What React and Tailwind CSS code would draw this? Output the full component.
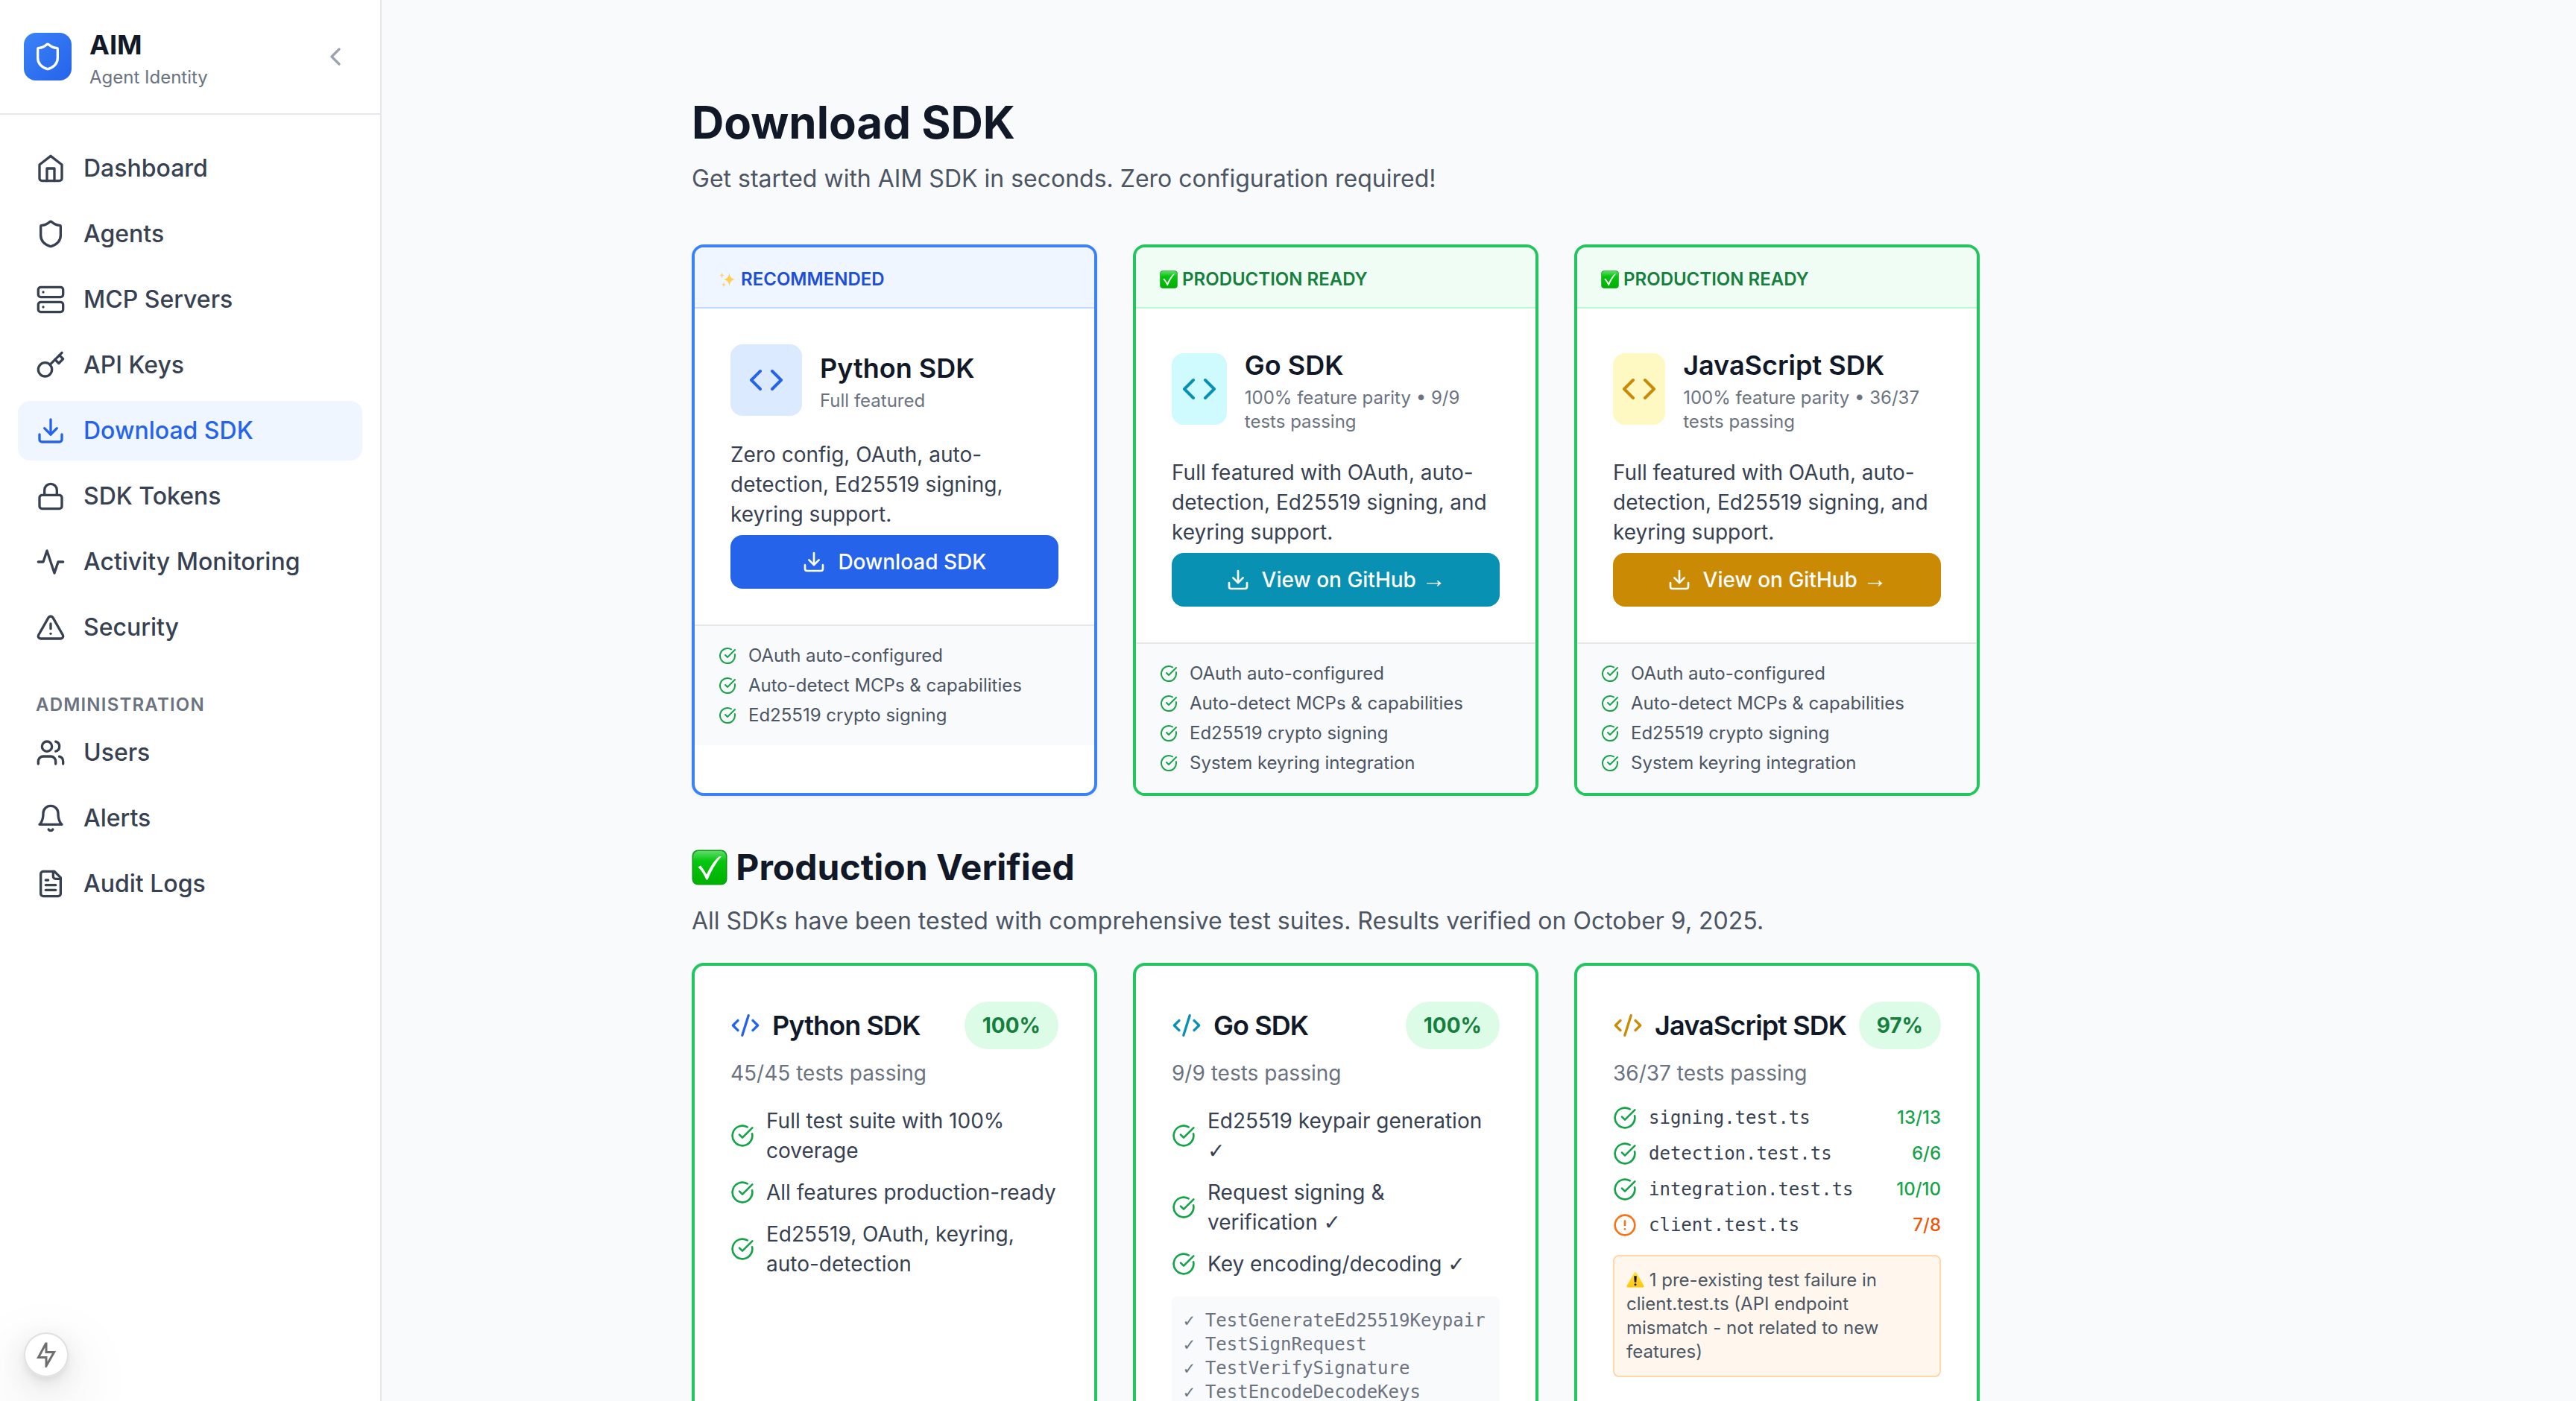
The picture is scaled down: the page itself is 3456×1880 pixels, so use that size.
import React from "react";

/* ---------- Icons ---------- */

function Icon({ className = "", children }) {
  return (
    <svg
      viewBox="0 0 24 24"
      fill="none"
      stroke="currentColor"
      strokeWidth="2"
      strokeLinecap="round"
      strokeLinejoin="round"
      aria-hidden="true"
      className={`shrink-0 ${className}`}
    >
      {children}
    </svg>
  );
}

const glyphs = {
  home: (
    <>
      <path d="m3 9 9-7 9 7v11a2 2 0 0 1-2 2H5a2 2 0 0 1-2-2z" />
      <polyline points="9 22 9 12 15 12 15 22" />
    </>
  ),
  shield: (
    <path d="M20 13c0 5-3.5 7.5-7.66 8.95a1 1 0 0 1-.67-.01C7.5 20.5 4 18 4 13V6a1 1 0 0 1 1-1c2 0 4.5-1.2 6.24-2.72a1.17 1.17 0 0 1 1.52 0C14.51 3.81 17 5 19 5a1 1 0 0 1 1 1z" />
  ),
  server: (
    <>
      <rect width="20" height="8" x="2" y="2" rx="2" ry="2" />
      <rect width="20" height="8" x="2" y="14" rx="2" ry="2" />
      <path d="M6 6h.01" />
      <path d="M6 18h.01" />
    </>
  ),
  key: (
    <>
      <path d="m15.5 7.5 3 3L22 7l-3-3" />
      <path d="m21 2-9.6 9.6" />
      <circle cx="7.5" cy="15.5" r="5.5" />
    </>
  ),
  download: (
    <>
      <path d="M21 15v4a2 2 0 0 1-2 2H5a2 2 0 0 1-2-2v-4" />
      <polyline points="7 10 12 15 17 10" />
      <path d="M12 15V3" />
    </>
  ),
  lock: (
    <>
      <rect width="18" height="11" x="3" y="11" rx="2" ry="2" />
      <path d="M7 11V7a5 5 0 0 1 10 0v4" />
    </>
  ),
  activity: <path d="M22 12h-4l-3 9L9 3l-3 9H2" />,
  alertTriangle: (
    <>
      <path d="m21.73 18-8-14a2 2 0 0 0-3.48 0l-8 14A2 2 0 0 0 4 21h16a2 2 0 0 0 1.73-3" />
      <path d="M12 9v4" />
      <path d="M12 17h.01" />
    </>
  ),
  users: (
    <>
      <path d="M16 21v-2a4 4 0 0 0-4-4H6a4 4 0 0 0-4 4v2" />
      <circle cx="9" cy="7" r="4" />
      <path d="M22 21v-2a4 4 0 0 0-3-3.87" />
      <path d="M16 3.13a4 4 0 0 1 0 7.75" />
    </>
  ),
  bell: (
    <>
      <path d="M6 8a6 6 0 0 1 12 0c0 7 3 9 3 9H3s3-2 3-9" />
      <path d="M10.3 21a1.94 1.94 0 0 0 3.4 0" />
    </>
  ),
  fileText: (
    <>
      <path d="M15 2H6a2 2 0 0 0-2 2v16a2 2 0 0 0 2 2h12a2 2 0 0 0 2-2V7Z" />
      <path d="M14 2v4a2 2 0 0 0 2 2h4" />
      <path d="M10 9H8" />
      <path d="M16 13H8" />
      <path d="M16 17H8" />
    </>
  ),
  chevronLeft: <path d="m15 18-6-6 6-6" />,
  code: (
    <>
      <polyline points="16 18 22 12 16 6" />
      <polyline points="8 6 2 12 8 18" />
    </>
  ),
  codeXml: (
    <>
      <path d="m18 16 4-4-4-4" />
      <path d="m6 8-4 4 4 4" />
      <path d="m14.5 4-5 16" />
    </>
  ),
  check: (
    <>
      <path d="M21.801 10A10 10 0 1 1 17 3.335" />
      <path d="m9 11 3 3L22 4" />
    </>
  ),
  alertCircle: (
    <>
      <circle cx="12" cy="12" r="10" />
      <path d="M12 8v4" />
      <path d="M12 16h.01" />
    </>
  ),
};

/* ---------- Emoji drawings ---------- */

function CheckEmoji({ className }) {
  return (
    <svg viewBox="0 0 48 48" role="img" aria-label="check mark" className={className}>
      <defs>
        <linearGradient id="emoji-green" x1="0" y1="0" x2="0" y2="1">
          <stop offset="0" stopColor="#5fdc6a" />
          <stop offset="0.3" stopColor="#06c60f" />
          <stop offset="1" stopColor="#00b000" />
        </linearGradient>
      </defs>
      <rect x="0.5" y="0.5" width="47" height="47" rx="8" fill="#0a9a14" />
      <rect x="2" y="2" width="44" height="45" rx="7" fill="url(#emoji-green)" />
      <path d="M8.5 23.5 12 21.5C15 25 17.5 29 20 33.500 24.500 23.500 30 15 36.500 9.500L40 9C32 18.500 26 29 21.500 40.500H19.500C16.500 33.500 13 28 8.500 23.500Z" fill="#fff" />
    </svg>
  );
}

function SparklesEmoji({ className }) {
  return (
    <svg viewBox="0 0 48 48" role="img" aria-label="sparkles" className={className}>
      <path d="M29 6c1.500 11 4 15 15 18-11 3-13.500 7-15 19-1.500-12-4-16-15-19 11-3 13.500-7 15-18Z" fill="#fdce4f" />
      <path d="M9 4c.8 6 2 8 7 9-5 1-6.200 3-7 9-.8-6-2-8-7-9 5-1 6.200-3 7-9Z" fill="#f9d48a" />
      <path d="M14 30c.7 5 2 7 6 8-4 1-5.300 3-6 8-.7-5-2-7-6-8 4-1 5.300-3 6-8Z" fill="#f9d48a" />
    </svg>
  );
}

function WarningEmoji({ className }) {
  return (
    <svg viewBox="0 0 48 48" role="img" aria-label="warning" className={className}>
      <defs>
        <linearGradient id="emoji-yellow" x1="0" y1="0" x2="0" y2="1">
          <stop offset="0" stopColor="#ffe24a" />
          <stop offset="1" stopColor="#ffc60a" />
        </linearGradient>
      </defs>
      <path d="M24 4c1.500 0 2.500.8 3.300 2.200L46.500 40c1.500 2.700.3 5-2.500 5H4c-2.800 0-4-2.300-2.500-5L20.700 6.200C21.500 4.800 22.500 4 24 4Z" fill="url(#emoji-yellow)" />
      <path d="M21 15h6l-1 16h-4Z" fill="#1c1a10" stroke="#1c1a10" strokeLinejoin="round" />
      <circle cx="24" cy="37.500" r="3" fill="#1c1a10" />
    </svg>
  );
}

/* ---------- Data ---------- */

const mainNav = [
  { label: "Dashboard", icon: "home" },
  { label: "Agents", icon: "shield" },
  { label: "MCP Servers", icon: "server" },
  { label: "API Keys", icon: "key" },
  { label: "Download SDK", icon: "download", active: true },
  { label: "SDK Tokens", icon: "lock" },
  { label: "Activity Monitoring", icon: "activity" },
  { label: "Security", icon: "alertTriangle" },
];

const adminNav = [
  { label: "Users", icon: "users" },
  { label: "Alerts", icon: "bell" },
  { label: "Audit Logs", icon: "fileText" },
];

const baseFeatures = ["OAuth auto-configured", "Auto-detect MCPs & capabilities", "Ed25519 crypto signing"];

const downloads = [
  {
    name: "Python SDK",
    tagline: "Full featured",
    description: "Zero config, OAuth, auto-detection, Ed25519 signing, keyring support.",
    badge: "RECOMMENDED",
    recommended: true,
    border: "border-[#3b82f6]",
    strip: "bg-[#eff6ff] border-[#bfdbfe] text-[#1d4ed8]",
    tile: "bg-[#dbeafe] text-[#2563eb]",
    button: "bg-[#2563eb]",
    features: baseFeatures,
  },
  {
    name: "Go SDK",
    tagline: "100% feature parity • 9/9 tests passing",
    description: "Full featured with OAuth, auto-detection, Ed25519 signing, and keyring support.",
    badge: "PRODUCTION READY",
    border: "border-[#22c55e]",
    strip: "bg-[#f0fdf4] border-[#bbf7d0] text-[#15803d]",
    tile: "bg-[#cffafe] text-[#0891b2]",
    button: "bg-[#0891b2]",
    features: [...baseFeatures, "System keyring integration"],
  },
  {
    name: "JavaScript SDK",
    tagline: "100% feature parity • 36/37 tests passing",
    description: "Full featured with OAuth, auto-detection, Ed25519 signing, and keyring support.",
    badge: "PRODUCTION READY",
    border: "border-[#22c55e]",
    strip: "bg-[#f0fdf4] border-[#bbf7d0] text-[#15803d]",
    tile: "bg-[#fef9c3] text-[#ca8a04]",
    button: "bg-[#ca8a04]",
    features: [...baseFeatures, "System keyring integration"],
  },
];

const goTests = ["TestGenerateEd25519Keypair", "TestSignRequest", "TestVerifySignature", "TestEncodeDecodeKeys"];

const jsTests = [
  { file: "signing.test.ts", score: "13/13", ok: true },
  { file: "detection.test.ts", score: "6/6", ok: true },
  { file: "integration.test.ts", score: "10/10", ok: true },
  { file: "client.test.ts", score: "7/8", ok: false },
];

/* ---------- Sidebar ---------- */

function NavItem({ label, icon, active }) {
  return (
    <li>
      <a
        href="#"
        aria-current={active ? "page" : undefined}
        className={`flex items-center gap-6 rounded-2xl px-6 py-4 text-[32px] leading-[48px] font-medium ${
          active ? "bg-[#eff6ff] text-[#2563eb]" : "text-[#374151]"
        }`}
      >
        <Icon className="size-10">{glyphs[icon]}</Icon>
        {label}
      </a>
    </li>
  );
}

function Sidebar() {
  return (
    <aside className="flex w-128 shrink-0 flex-col border-r-2 border-[#e5e7eb] bg-white">
      <div className="flex items-center gap-6 border-b-2 border-[#e5e7eb] p-8">
        <div className="flex size-16 items-center justify-center rounded-2xl bg-linear-to-br from-[#3b82f6] to-[#2563eb] text-white">
          <Icon className="size-10">{glyphs.shield}</Icon>
        </div>
        <div className="flex-1">
          <p className="text-[36px] leading-[56px] font-bold text-[#111827]">AIM</p>
          <p className="text-2xl text-[#6b7280]">Agent Identity</p>
        </div>
        <button type="button" aria-label="Collapse sidebar" className="p-2 text-[#9ca3af]">
          <Icon className="size-10">{glyphs.chevronLeft}</Icon>
        </button>
      </div>
      <nav className="flex-1 px-6 py-8" aria-label="Main">
        <ul className="flex flex-col gap-2">
          {mainNav.map((item) => (
            <NavItem key={item.label} {...item} />
          ))}
        </ul>
        <h2 className="mt-12 mb-2 px-6 text-2xl font-semibold tracking-wider text-[#6b7280]">ADMINISTRATION</h2>
        <ul className="flex flex-col gap-2">
          {adminNav.map((item) => (
            <NavItem key={item.label} {...item} />
          ))}
        </ul>
      </nav>
    </aside>
  );
}

/* ---------- Download cards ---------- */

function DownloadCard({ sdk }) {
  return (
    <article className={`overflow-hidden rounded-2xl border-4 bg-white shadow-[0_2px_4px_rgba(0,0,0,0.05)] ${sdk.border}`}>
      <p className={`border-b-2 px-8 pt-[27px] pb-[21px] text-2xl font-semibold ${sdk.strip}`}>
        {sdk.recommended ? (
          <SparklesEmoji className="inline-block size-6 align-[-4px]" />
        ) : (
          <CheckEmoji className="inline-block size-6 align-[-4px]" />
        )}{" "}
        {sdk.badge}
      </p>
      <div className="p-12">
        <div className="flex items-center gap-6">
          <div className={`flex h-24 w-24 items-center justify-center rounded-2xl ${sdk.tile}`}>
            <Icon className="size-12">{glyphs.code}</Icon>
          </div>
          <div>
            <h3 className="text-[36px] leading-[56px] font-semibold text-[#111827]">{sdk.name}</h3>
            <p className="text-2xl text-[#6b7280]">{sdk.tagline}</p>
          </div>
        </div>
        <p className="mt-8 text-[28px] leading-[40px] text-[#374151]">{sdk.description}</p>
        <button
          type="button"
          className={`mt-2 flex w-full items-center justify-center gap-4 rounded-2xl py-4 text-[28px] leading-[40px] font-medium text-white ${sdk.button}`}
        >
          <Icon className="size-8">{glyphs.download}</Icon>
          {sdk.recommended ? (
            "Download SDK"
          ) : (
            <span>
              View on GitHub <span className="font-['Liberation_Serif',serif] text-[32px] leading-none font-normal">→</span>
            </span>
          )}
        </button>
      </div>
      <ul className="flex flex-col gap-2 border-t-2 border-[#e5e7eb] bg-[#f9fafb] px-8 py-6 text-2xl text-[#4b5563]">
        {sdk.features.map((feature) => (
          <li key={feature} className="flex items-center gap-4">
            <Icon className="size-6 text-[#16a34a]">{glyphs.check}</Icon>
            {feature}
          </li>
        ))}
      </ul>
    </article>
  );
}

/* ---------- Verification cards ---------- */

function VerifiedCard({ name, iconColor, percent, tests, children }) {
  return (
    <article className="rounded-2xl border-4 border-[#22c55e] bg-white p-12 shadow-[0_2px_4px_rgba(0,0,0,0.05)]">
      <div className="flex items-center justify-between">
        <h3 className="flex items-center gap-4 text-[36px] leading-[56px] font-semibold tracking-tight whitespace-nowrap text-[#111827]">
          <Icon className={`size-10 ${iconColor}`}>{glyphs.codeXml}</Icon>
          {name}
        </h3>
        <span className="rounded-full bg-[#dcfce7] px-6 py-3 text-[28px] leading-[40px] font-bold text-[#15803d]">
          {percent}
        </span>
      </div>
      <p className="mt-3 text-[28px] leading-[40px] text-[#6b7280]">{tests}</p>
      <div className="mt-6">{children}</div>
    </article>
  );
}

function Tick() {
  return <span className="font-['DejaVu_Sans',sans-serif] leading-none font-bold">✓</span>;
}

function CheckItem({ children }) {
  return (
    <li className="flex items-center gap-4">
      <Icon className="size-8 text-[#16a34a]">{glyphs.check}</Icon>
      <span>{children}</span>
    </li>
  );
}

function CheckList({ children }) {
  return <ul className="flex flex-col gap-4 text-[28px] leading-[40px] text-[#374151]">{children}</ul>;
}

/* ---------- Page ---------- */

export default function App() {
  return (
    <div className="flex h-screen overflow-hidden bg-[#f9fafb] font-['Inter',sans-serif] antialiased">
      <Sidebar />

      <main className="min-w-0 flex-1 overflow-y-auto [scrollbar-width:none]">
        <div className="max-w-[2560px]">
          <div className="mx-auto max-w-[1792px] px-8 py-32">
            <header>
              <h1 className="text-6xl leading-[72px] font-bold text-[#111827]">Download SDK</h1>
              <p className="mt-4 text-[32px] leading-[48px] text-[#4b5563]">
                Get started with AIM SDK in seconds. Zero configuration required!
              </p>
            </header>

            <section className="mt-16 grid grid-cols-3 gap-12" aria-label="SDK downloads">
              {downloads.map((sdk) => (
                <DownloadCard key={sdk.name} sdk={sdk} />
              ))}
            </section>

            <section className="mt-16">
              <h2 className="text-5xl leading-[64px] font-bold text-[#111827]">
                <CheckEmoji className="inline-block size-12 align-[-7px]" /> Production Verified
              </h2>
              <p className="mt-4 text-[32px] leading-[48px] text-[#4b5563]">
                All SDKs have been tested with comprehensive test suites. Results verified on October 9, 2025.
              </p>

              <div className="mt-8 grid grid-cols-3 gap-12">
                <VerifiedCard name="Python SDK" iconColor="text-[#2563eb]" percent="100%" tests="45/45 tests passing">
                  <CheckList>
                    <CheckItem>Full test suite with 100% coverage</CheckItem>
                    <CheckItem>All features production-ready</CheckItem>
                    <CheckItem>Ed25519, OAuth, keyring, auto-detection</CheckItem>
                  </CheckList>
                </VerifiedCard>

                <VerifiedCard name="Go SDK" iconColor="text-[#0891b2]" percent="100%" tests="9/9 tests passing">
                  <CheckList>
                    <CheckItem>
                      Ed25519 keypair generation <Tick />
                    </CheckItem>
                    <CheckItem>
                      Request signing & verification <Tick />
                    </CheckItem>
                    <CheckItem>
                      Key encoding/decoding <Tick />
                    </CheckItem>
                  </CheckList>
                  <ul className="mt-6 rounded-lg bg-[#f9fafb] p-4 font-['DejaVu_Sans_Mono',monospace] text-2xl text-[#6b7280]">
                    {goTests.map((test) => (
                      <li key={test}>✓ {test}</li>
                    ))}
                  </ul>
                </VerifiedCard>

                <VerifiedCard name="JavaScript SDK" iconColor="text-[#ca8a04]" percent="97%" tests="36/37 tests passing">
                  <ul className="flex flex-col gap-4 text-2xl">
                    {jsTests.map(({ file, score, ok }) => (
                      <li key={file} className="flex items-center gap-4">
                        <Icon className={`size-8 ${ok ? "text-[#16a34a]" : "text-[#f97316]"}`}>
                          {ok ? glyphs.check : glyphs.alertCircle}
                        </Icon>
                        <span className="flex-1 font-['DejaVu_Sans_Mono',monospace] text-[#374151]">{file}</span>
                        <span className={`font-medium ${ok ? "text-[#16a34a]" : "text-[#ea580c]"}`}>{score}</span>
                      </li>
                    ))}
                  </ul>
                  <p className="mt-6 rounded-lg border-2 border-[#fed7aa] bg-[#fff7ed] p-4 text-2xl text-[#4b5563]">
                    <WarningEmoji className="inline-block size-6 align-[-3px]" /> 1 pre-existing test failure in
                    client.test.ts (API endpoint mismatch - not related to new features)
                  </p>
                </VerifiedCard>
              </div>
            </section>
          </div>
        </div>
      </main>

      <button
        type="button"
        aria-label="Open developer tools"
        className="fixed bottom-8 left-8 flex size-15 items-center justify-center rounded-full bg-white text-[#6f6f6f] shadow-[0_0_0_2px_#e0e0e0_inset,0_4px_8px_rgba(0,0,0,0.04),0_8px_16px_rgba(0,0,0,0.06),0_32px_96px_rgba(0,0,0,0.16),0_8px_48px_rgba(0,0,0,0.10)]"
      >
        <svg viewBox="0 0 26 34" fill="none" stroke="currentColor" strokeWidth="3" aria-hidden="true" className="h-[34px] w-[26px]">
          <path d="M12.500 2 2.500 20.500H13V32L23.500 13.500H13V2Z" />
        </svg>
      </button>
    </div>
  );
}
